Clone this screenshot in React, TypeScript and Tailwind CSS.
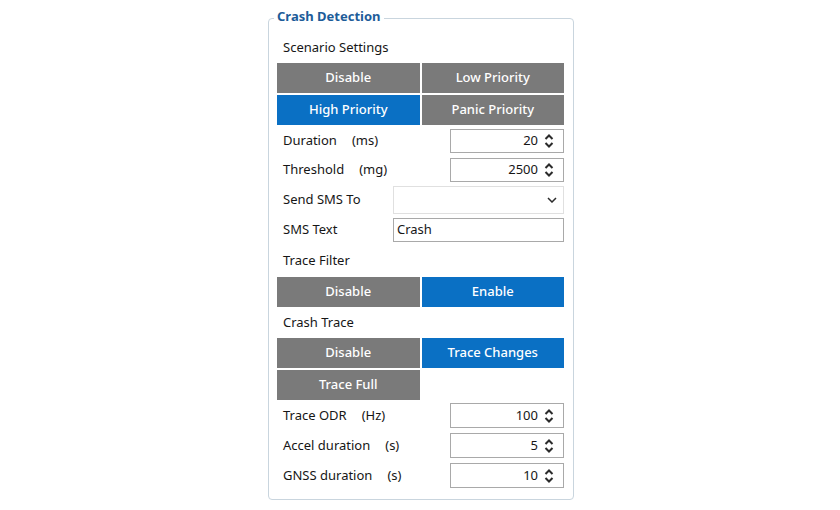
import React from 'react'

type Opt = { label: string; active?: boolean }

const Spinner = () => (
  <svg width="10" height="16" viewBox="0 0 10 16" className="shrink-0">
    <path d="M1.5 6 L5 2.5 L8.5 6" fill="none" stroke="#2b2b2b" strokeWidth="2" />
    <path d="M1.5 10 L5 13.5 L8.5 10" fill="none" stroke="#2b2b2b" strokeWidth="2" />
  </svg>
)

const Chevron = () => (
  <svg width="10" height="6" viewBox="0 0 10 6" className="shrink-0">
    <path d="M1 1 L5 5 L9 1" fill="none" stroke="#2b2b2b" strokeWidth="1.5" />
  </svg>
)

const Toggle = ({ options }: { options: Opt[] }) => (
  <div className="grid grid-cols-2 gap-[2px] bg-white">
    {options.map((o) => (
      <div
        key={o.label}
        className={`h-[30px] flex items-center justify-center text-white font-medium text-[13px] ${
          o.active ? 'bg-[#0a70c4]' : 'bg-[#7a7a7a]'
        }`}
      >
        {o.label}
      </div>
    ))}
  </div>
)

const Label = ({ text }: { text: string }) => (
  <div className="h-[24px] flex items-center pl-[6px] text-[13px] text-[#161616]">{text}</div>
)

const NumberRow = ({ label, unit, value, h, mt }: { label: string; unit: string; value: string; h: string; mt: string }) => (
  <div className={`flex items-center justify-between ${h} ${mt}`}>
    <div className="flex items-center gap-[15px] pl-[6px] text-[13px] text-[#161616]">
      <span>{label}</span>
      <span>{unit}</span>
    </div>
    <div className="w-[114px] h-full border border-[#a9a9a9] bg-white flex items-center justify-end gap-[6px] pr-[9px] text-[13px] text-[#161616]">
      <span>{value}</span>
      <Spinner />
    </div>
  </div>
)

const App = () => {
  return (
    <div className="w-[840px] h-[510px] bg-white pt-[18px] font-['Noto_Sans',sans-serif]">
      <div className="relative ml-[268px] w-[306px] h-[482px] border border-[#c9d5de] rounded-[4px] pt-[17px] pl-[8px] pr-[9px]">
        <div className="absolute left-[5px] top-[-12px] px-[3px] bg-white text-[13px] font-bold text-[#1d5c99]">
          Crash Detection
        </div>

        <Label text="Scenario Settings" />
        <div className="mt-[3px]">
          <Toggle
            options={[
              { label: 'Disable' },
              { label: 'Low Priority' },
              { label: 'High Priority', active: true },
              { label: 'Panic Priority' },
            ]}
          />
        </div>

        <NumberRow label="Duration" unit="(ms)" value="20" h="h-[24px]" mt="mt-[4px]" />
        <NumberRow label="Threshold" unit="(mg)" value="2500" h="h-[24px]" mt="mt-[5px]" />

        <div className="flex items-center justify-between h-[28px] mt-[4px]">
          <span className="pl-[6px] text-[13px] text-[#161616]">Send SMS To</span>
          <div className="w-[171px] h-full border border-[#e0e0e0] bg-white flex items-center justify-end pr-[6px]">
            <Chevron />
          </div>
        </div>

        <div className="flex items-center justify-between h-[24px] mt-[4px]">
          <span className="pl-[6px] text-[13px] text-[#161616]">SMS Text</span>
          <div className="w-[171px] h-full border border-[#a9a9a9] bg-white flex items-start pl-[3px] text-[13px] leading-[20px] text-[#161616]">
            Crash
          </div>
        </div>

        <div className="mt-[7px]">
          <Label text="Trace Filter" />
        </div>
        <div className="mt-[4px]">
          <Toggle options={[{ label: 'Disable' }, { label: 'Enable', active: true }]} />
        </div>

        <div className="mt-[4px]">
          <Label text="Crash Trace" />
        </div>
        <div className="mt-[3px]">
          <Toggle
            options={[
              { label: 'Disable' },
              { label: 'Trace Changes', active: true },
              { label: 'Trace Full' },
            ]}
          />
        </div>

        <NumberRow label="Trace ODR" unit="(Hz)" value="100" h="h-[25px]" mt="mt-[3px]" />
        <NumberRow label="Accel duration" unit="(s)" value="5" h="h-[25px]" mt="mt-[5px]" />
        <NumberRow label="GNSS duration" unit="(s)" value="10" h="h-[25px]" mt="mt-[5px]" />
      </div>
    </div>
  )
}

export default App
